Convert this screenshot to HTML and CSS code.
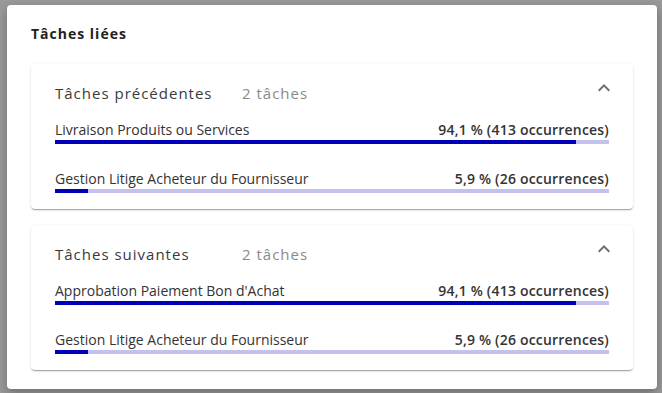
FILE: index.html
```html
<!DOCTYPE html>
<html lang="fr">
<head>
  <meta charset="UTF-8">
  <title>Tâches liées</title>
  <link rel="stylesheet" href="styles.css">
</head>
<body>

  <div class="dialog">
    <h2 class="titre">Tâches liées</h2>

    <div class="carte">
      <div class="entete">
        <span class="nom">Tâches précédentes</span>
        <span class="compte">2 tâches</span>
        <svg class="chevron" viewBox="0 0 24 24" width="24" height="24"><path d="M12 8l-6 6 1.41 1.41L12 10.83l4.59 4.58L18 14z"/></svg>
      </div>
      <div class="ligne">
        <div class="textes"><span>Livraison Produits ou Services</span><b>94,1 % (413 occurrences)</b></div>
        <div class="barre"><div class="plein" style="width: 94.1%"></div></div>
      </div>
      <div class="ligne">
        <div class="textes"><span>Gestion Litige Acheteur du Fournisseur</span><b>5,9 % (26 occurrences)</b></div>
        <div class="barre"><div class="plein" style="width: 5.9%"></div></div>
      </div>
    </div>

    <div class="carte">
      <div class="entete">
        <span class="nom">Tâches suivantes</span>
        <span class="compte">2 tâches</span>
        <svg class="chevron" viewBox="0 0 24 24" width="24" height="24"><path d="M12 8l-6 6 1.41 1.41L12 10.83l4.59 4.58L18 14z"/></svg>
      </div>
      <div class="ligne">
        <div class="textes"><span>Approbation Paiement Bon d'Achat</span><b>94,1 % (413 occurrences)</b></div>
        <div class="barre"><div class="plein" style="width: 94.1%"></div></div>
      </div>
      <div class="ligne">
        <div class="textes"><span>Gestion Litige Acheteur du Fournisseur</span><b>5,9 % (26 occurrences)</b></div>
        <div class="barre"><div class="plein" style="width: 5.9%"></div></div>
      </div>
    </div>
  </div>

</body>
</html>
```

FILE: styles.css
```css
:root {
  --bleu: #0000b8;
  --lavande: #c3c1ee;
  --texte: #333;
}

body {
  margin: 0;
  height: 393px;
  overflow: hidden;
  background-color: #9a9a9a;
  font-family: "Open Sans", "Noto Sans", sans-serif;
  color: var(--texte);
}

.dialog {
  box-sizing: border-box;
  width: 650px;
  height: 384px;
  margin: 5px 0 0 7px;
  padding: 19px 24px 0;
  background-color: white;
  border-radius: 4px;
  box-shadow: 0 4px 12px rgba(0, 0, 0, 0.3);
}

.titre {
  margin: 0 0 20px;
  font-size: 14px;
  line-height: 20px;
  font-weight: 700;
  letter-spacing: 1px;
  color: #222;
}

.carte {
  margin-bottom: 16px;
  padding: 19px 24px 16px;
  border-radius: 4px;
  box-shadow: 0 2px 1px -1px rgba(0, 0, 0, 0.2), 0 1px 1px rgba(0, 0, 0, 0.14), 0 1px 3px rgba(0, 0, 0, 0.12);
}

.entete {
  display: flex;
  align-items: center;
  height: 20px;
  margin-bottom: 18px;
  font-size: 15px;
  letter-spacing: 1px;
}

.nom {
  width: 187px;
  color: #3a3a3a;
}

.compte {
  color: #8a8a8a;
}

.chevron {
  margin: -10px -7px 0 auto;
  fill: #6e6e6e;
}

.ligne + .ligne {
  margin-top: 26px;
}

.textes {
  display: flex;
  justify-content: space-between;
  font-size: 14px;
  line-height: 18px;
}

.textes b {
  font-weight: 600;
  letter-spacing: 0.2px;
}

.barre {
  height: 4px;
  margin-top: 1px;
  background-color: var(--lavande);
}

.plein {
  height: 100%;
  background-color: var(--bleu);
}
```
